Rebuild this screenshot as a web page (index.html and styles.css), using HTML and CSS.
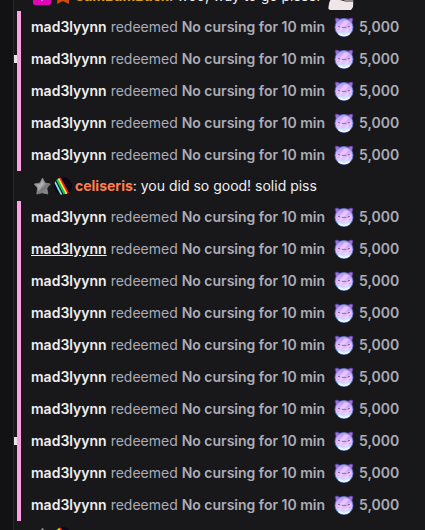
FILE: index.html
```html
<!DOCTYPE html>
<html lang="en">
<head>
<meta charset="utf-8">
<title>Chat</title>
<link rel="stylesheet" href="styles.css">
</head>
<body>
<svg width="0" height="0" class="defs" aria-hidden="true">
  <defs>
    <linearGradient id="face" x1="0" y1="0" x2="0" y2="1">
      <stop offset="0" stop-color="#b795f6"/><stop offset=".5" stop-color="#dfb4fc"/><stop offset="1" stop-color="#c4ecff"/>
    </linearGradient>
    <linearGradient id="steel" x1="0" y1="0" x2="1" y2="1">
      <stop offset="0" stop-color="#777"/><stop offset=".45" stop-color="#aaa"/><stop offset=".6" stop-color="#777"/><stop offset="1" stop-color="#999"/>
    </linearGradient>
    <clipPath id="disc"><circle cx="9" cy="9" r="9"/></clipPath>
    <symbol id="points" viewBox="0 0 20 20">
      <path d="M1.2 1.2 Q3.6 .6 6 2.4 L2.4 6.4 Q.8 4 1.2 1.2Z M18.8 1.2 Q16.4 .6 14 2.4 L17.6 6.4 Q19.2 4 18.8 1.2Z" fill="#a070d4" stroke="#4b2f86" stroke-width=".7"/>
      <circle cx="10" cy="10.4" r="9" fill="url(#face)" stroke="#5a78d8" stroke-width=".8"/>
      <path d="M3 12 L11 3 L15 4.5 L6 15Z M9 16 L17 8 L17.5 10 L11 17Z" fill="#f8d4ff" opacity=".65"/>
      <path d="M4.5 16.5 Q10 20.5 15.5 16.5" stroke="#e8f8ff" stroke-width="1.6" fill="none"/>
      <path d="M4 9.5 h1.8 v1 M16 9.5 h-1.8 v1 M7.8 10.4 h4.4" stroke="#7c5cc0" stroke-width=".9" fill="none"/>
      <path d="M3.5 12.2 h2 M14.5 12.2 h2" stroke="#f58ae4" stroke-width="1"/>
    </symbol>
    <symbol id="star" viewBox="0 0 18 18">
      <path d="M9.5 1 L12 6 L17.3 7 L13.8 11 L14.8 17 L9.2 15.8 L3.8 17 L4.6 11 L1.2 7 L7 6Z" fill="url(#steel)" stroke="#888" stroke-width=".8" stroke-linejoin="round"/>
      <path d="M9.5 2 L10 8 L5 15 L6 10 L3 7.5 L8 7Z" fill="#bbb" opacity=".4"/>
    </symbol>
    <symbol id="prism" viewBox="0 0 18 18">
      <g clip-path="url(#disc)">
        <rect width="18" height="18" fill="#0d0718"/>
        <g stroke-width="2">
          <path d="M5.4 0 L14.4 17" stroke="#e8202c"/><path d="M3.5 0 L12.5 17" stroke="#ffe62e"/>
          <path d="M1.6 0 L10.6 17" stroke="#16c45c"/><path d="M-.6 2 L7.6 18" stroke="#7fe8f4" stroke-width="1.7"/>
        </g>
      </g>
    </symbol>
  </defs>
</svg>
<main class="page">
  <aside class="gutter"></aside>
  <section class="chat" id="chat">
    <div class="message first">
      <svg class="badge" viewBox="0 0 18 18"><rect width="18" height="18" rx="2" fill="#e005b9"/><path d="M9 3 l4 6 -4 5 -4-5Z" fill="#fff"/></svg>
      <svg class="badge" viewBox="0 0 18 18"><path d="M9 1 L15 8 L15 17 L9 14 L3 17 L4 8Z" fill="#d24b08"/><path d="M9 5 L12 13 L7 12Z" fill="#8e2d08"/></svg>
      <p class="text"><b class="gold">SamBamBack</b>: woo, way to go pisser</p>
      <svg class="emote" viewBox="0 0 26 28"><path d="M.5 27 Q0 19 5 15 Q9 4 22 6 Q26 14 25 25 L23 28 H2Z" fill="#f0e6e8"/><path d="M10 17 q7 3 15 2" stroke="#333" fill="none"/></svg>
    </div>
    <div class="group" data-rows="5"></div>
    <div class="message">
      <svg class="badge"><use href="#star"/></svg>
      <svg class="badge"><use href="#prism"/></svg>
      <p class="text"><b class="coral">celiseris</b>: you did so good! solid piss</p>
    </div>
    <div class="group" data-rows="10"></div>
    <div class="message">
      <svg class="badge"><use href="#star"/></svg>
      <svg class="badge"><use href="#prism"/></svg>
    </div>
  </section>
</main>
<script src="chat.js"></script>
</body>
</html>
```
FILE: styles.css
```css
* { box-sizing: border-box; }
html, body { height: 100%; }
body {
  margin: 0;
  overflow: hidden;
  background: #18181b;
  color: #efeff1;
  font: 14px/20px Inter, "Liberation Sans", sans-serif;
}
.defs { position: absolute; }
.page { display: flex; height: 100vh; overflow: hidden; }
.gutter { flex: 0 0 14px; background: #121214; border-right: 1px solid #29292d; }
.chat { flex: 1; min-width: 0; padding-left: 3px; }
.message {
  display: flex;
  align-items: center;
  height: 30px;
  padding-left: 16px;
  white-space: nowrap;
}
.first { margin-top: -19px; }
.text { margin: 0; }
.badge { flex: none; width: 18px; height: 18px; margin-right: 3px; }
.emote { flex: none; width: 26px; height: 28px; margin-left: 6px; }
.gold { color: #daa520; }
.coral { color: #ff7f50; }
.group { border-left: 4px solid #ff9fe6; }
.row {
  position: relative;
  display: flex;
  align-items: center;
  height: 32px;
  padding-left: 10px;
  color: #adadb8;
  white-space: pre;
}
.user { color: #efeff1; font-weight: 600; text-decoration: none; }
.user.active { text-decoration: underline; }
.reward { font-weight: 600; }
.points { width: 20px; height: 20px; margin: 0 5px 0 9px; }
.marked::before {
  content: "";
  position: absolute;
  left: -7px;
  top: 12px;
  width: 3px;
  height: 8px;
  background: #e4e4e6;
}
```
FILE: chat.js
```js
document.querySelectorAll(".group").forEach((group, g) => {
  const marked = g === 0 ? 1 : 7;
  for (let i = 0; i < Number(group.dataset.rows); i++) {
    const row = document.createElement("div");
    row.className = "row" + (i === marked ? " marked" : "");
    row.innerHTML = `<a href="#chat" class="user${g === 1 && i === 1 ? " active" : ""}">mad3lyynn</a> redeemed <span class="reward">No cursing for 10 min</span><svg class="points" aria-hidden="true"><use href="#points"/></svg><span class="reward">5,000</span>`;
    group.append(row);
  }
});
```
